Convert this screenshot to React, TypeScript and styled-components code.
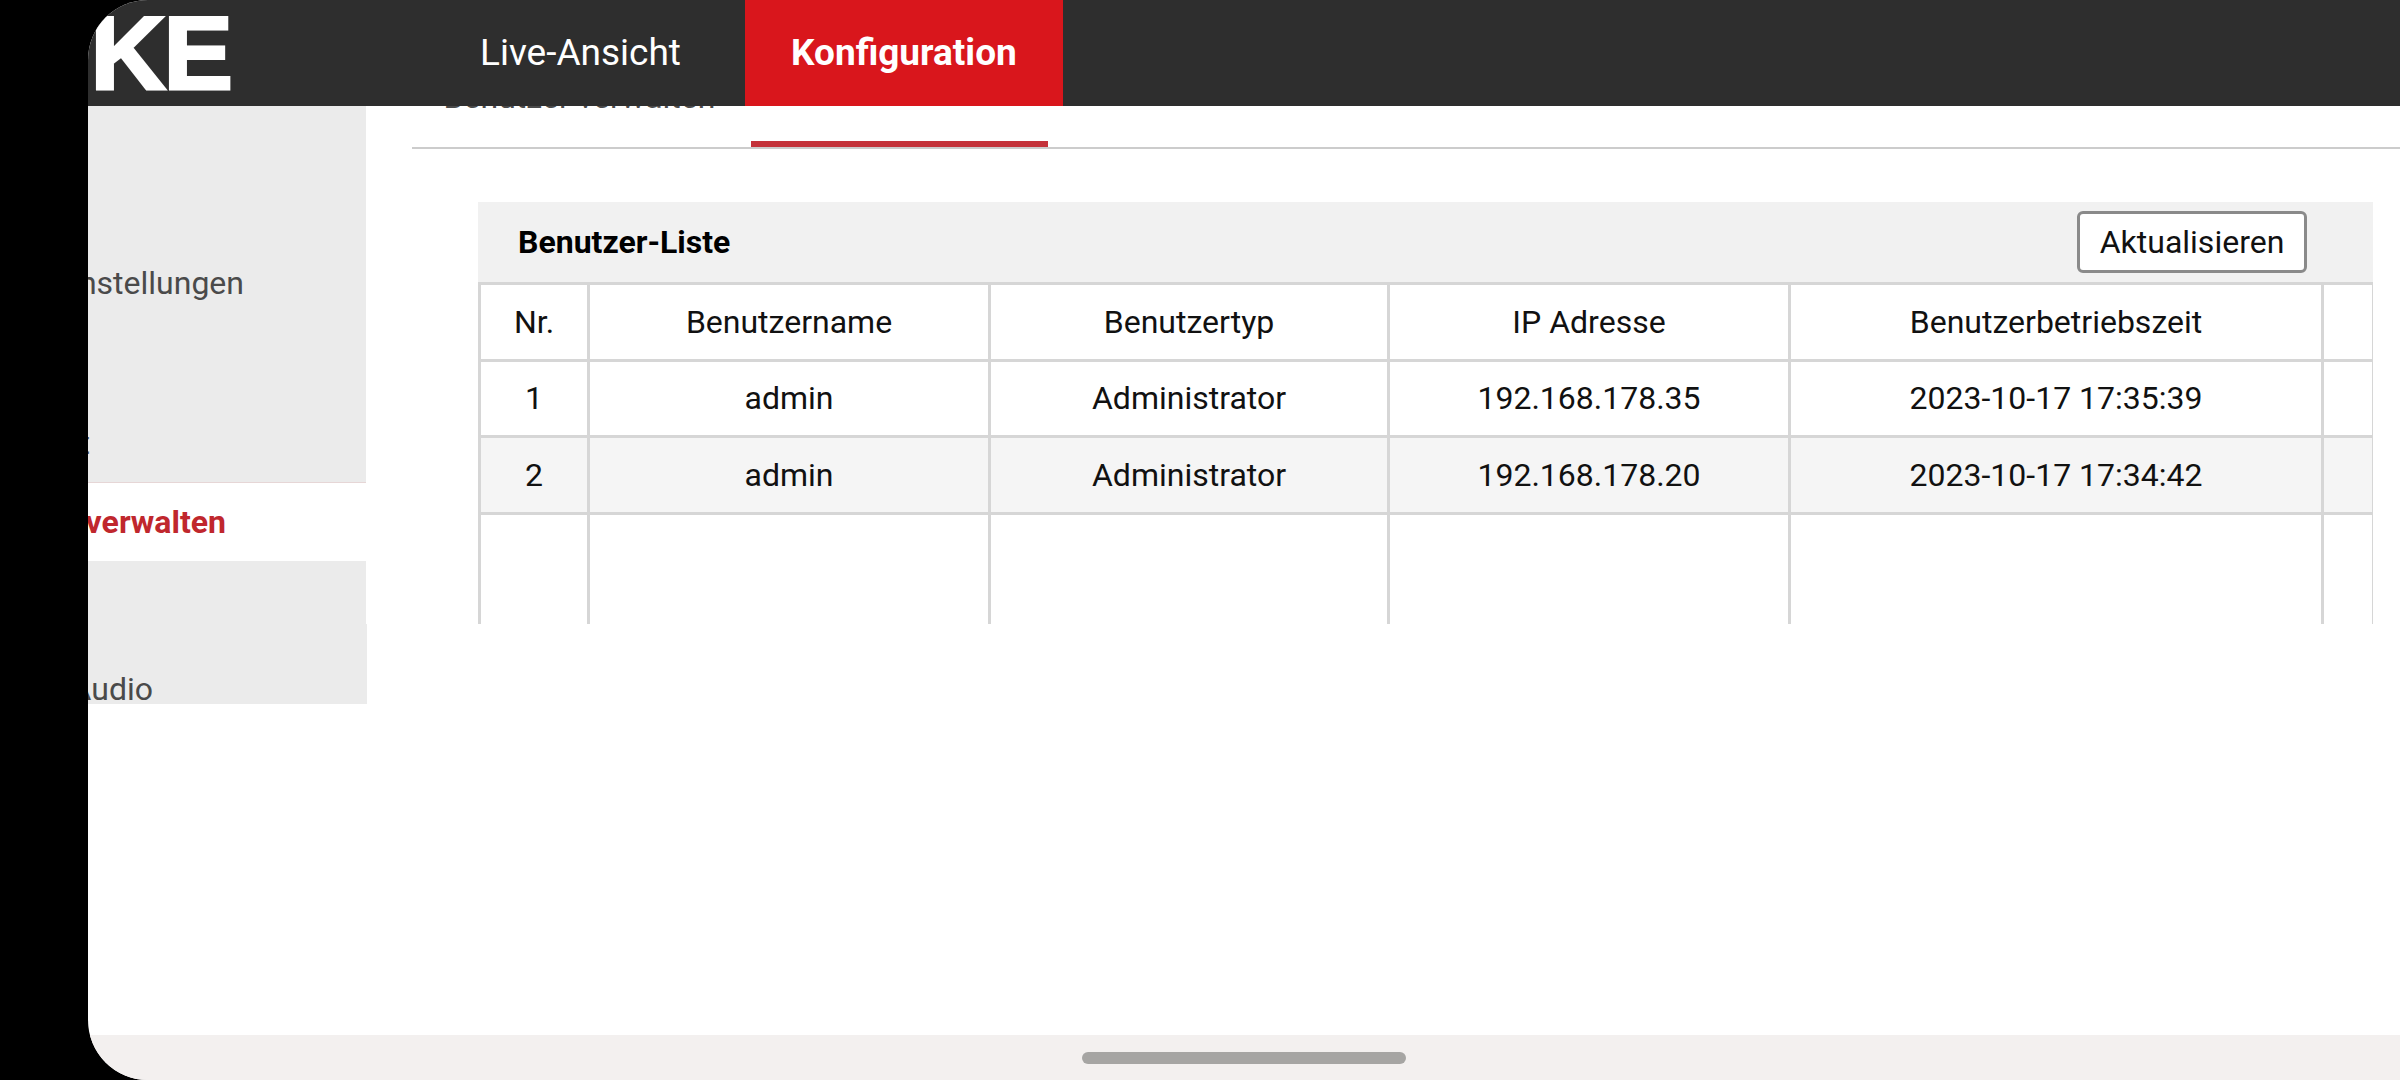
import styled, { createGlobalStyle } from "styled-components";

const GlobalStyle = createGlobalStyle`
  html, body { margin: 0; padding: 0; background: #000; }
  body { font-family: Roboto, "Liberation Sans", sans-serif; }
`;

const Page = styled.div`
  width: 2400px;
  height: 1080px;
  padding-left: 88px;
  box-sizing: border-box;
  background: #000;
  overflow: hidden;
`;

const Screen = styled.div`
  width: 2312px;
  height: 1080px;
  display: flex;
  flex-direction: column;
  background: #fff;
  overflow: hidden;
  border-radius: 60px 0 0 60px;
`;

const TopBar = styled.header`
  height: 106px;
  flex: none;
  display: flex;
  background: #2e2e2e;
`;

const Logo = styled.div`
  width: 143px;
  flex: none;
  display: flex;
  justify-content: flex-end;
  overflow: hidden;
  color: #fff;
  font: 900 104px/106px "Liberation Sans", Arial, sans-serif;
  letter-spacing: -2px;
  -webkit-text-stroke: 3px #fff;
  filter: blur(0.6px);
`;

const Nav = styled.nav`
  display: flex;
  gap: 18px;
  margin-left: 203px;
`;

const NavTab = styled.a<{ $active?: boolean }>`
  display: flex;
  align-items: center;
  padding: 0 46px 1px;
  font-size: 37px;
  font-weight: ${(p) => (p.$active ? 700 : 400)};
  color: #fff;
  background: ${(p) => (p.$active ? "#d9161c" : "transparent")};
`;

const Body = styled.div`
  flex: 1;
  display: flex;
  min-height: 0;
`;

const Sidebar = styled.aside`
  width: 278px;
  flex: none;
  display: flex;
  flex-direction: column;
`;

const SideGroup = styled.div<{ $height: number; $wide?: boolean }>`
  height: ${(p) => p.$height}px;
  width: ${(p) => (p.$wide ? "279px" : "278px")};
  flex: none;
  background: #ebebeb;
  overflow: hidden;
`;

const SideItem = styled.div<{ $height: number; $right: number; $active?: boolean }>`
  height: ${(p) => p.$height}px;
  box-sizing: border-box;
  display: flex;
  align-items: center;
  justify-content: flex-end;
  padding-right: ${(p) => p.$right}px;
  font-size: 32px;
  white-space: nowrap;
  font-weight: ${(p) => (p.$active ? 700 : 400)};
  color: ${(p) => (p.$active ? "#c0272d" : "#4a4a4a")};
  background: ${(p) => (p.$active ? "#fff" : "transparent")};
  border-top: ${(p) => (p.$active ? "1px solid #e6d6d6" : "none")};
`;

const Content = styled.main`
  flex: 1;
  min-width: 0;
  display: flex;
  flex-direction: column;
`;

const TabStrip = styled.div`
  height: 41px;
  margin-left: 46px;
  display: flex;
  border-bottom: 2px solid #cccccc;
  overflow: hidden;
`;

const Tab = styled.div<{ $active?: boolean; $width: number }>`
  width: ${(p) => p.$width}px;
  height: 41px;
  flex: none;
  box-sizing: border-box;
  padding-right: 4px;
  text-align: center;
  border-bottom: 6px solid ${(p) => (p.$active ? "#c4323a" : "transparent")};
`;

const TabLabel = styled.span`
  display: block;
  margin-top: -27px;
  font-size: 32px;
  line-height: 36px;
  white-space: nowrap;
  color: #4a4a4a;
`;

const Panel = styled.section`
  width: 1895px;
  height: 422px;
  margin: 53px 0 0 112px;
  overflow: hidden;
  box-sizing: border-box;
`;

const PanelHeader = styled.div`
  height: 80px;
  display: flex;
  align-items: center;
  justify-content: space-between;
  padding: 0 66px 0 40px;
  background: #f1f1f1;
`;

const PanelTitle = styled.h2`
  margin: 0;
  font-size: 32px;
  font-weight: 700;
  color: #000;
`;

const RefreshButton = styled.button`
  width: 230px;
  height: 62px;
  padding: 0;
  box-sizing: border-box;
  font-family: inherit;
  font-size: 32px;
  color: #111;
  background: #fff;
  border: 3px solid #8a8a8a;
  border-radius: 6px;
`;

const Table = styled.table`
  width: 1894px;
  table-layout: fixed;
  border-collapse: collapse;
  font-size: 32px;
  color: #111;
`;

const Row = styled.tr<{ $striped?: boolean; $tall?: boolean }>`
  height: ${(p) => (p.$tall ? "200px" : "76.5px")};
  background: ${(p) => (p.$striped ? "#f5f5f5" : "#fff")};
`;

const Cell = styled.td`
  padding: 0;
  text-align: center;
  border: 3px solid #d6d6d6;
`;

const HeadCell = styled(Cell).attrs({ as: "th" })`
  font-weight: 400;
`;

const HomeBar = styled.div`
  height: 45px;
  flex: none;
  display: flex;
  align-items: center;
  padding-left: 994px;
  background: #f3f0ef;
`;

const HomePill = styled.div`
  width: 324px;
  height: 12px;
  border-radius: 6px;
  background: #a6a5a3;
`;

const columns = [109, 401, 399, 401, 533, 51];

const users = [
  { id: 1, name: "admin", type: "Administrator", ip: "192.168.178.35", time: "2023-10-17 17:35:39" },
  { id: 2, name: "admin", type: "Administrator", ip: "192.168.178.20", time: "2023-10-17 17:34:42" },
];

export default function App() {
  return (
    <Page>
      <GlobalStyle />
      <Screen>
        <TopBar>
          <Logo>KE</Logo>
          <Nav>
            <NavTab>Live-Ansicht</NavTab>
            <NavTab $active>Konfiguration</NavTab>
          </Nav>
        </TopBar>
        <Body>
          <Sidebar>
            <SideGroup $height={376}>
              <SideItem $height={138} $right={0} />
              <SideItem $height={78} $right={122}>Systemeinstellungen</SideItem>
              <SideItem $height={82} $right={0} />
              <SideItem $height={78} $right={276}>Zeit</SideItem>
            </SideGroup>
            <SideItem $height={79} $right={140} $active>Benutzer verwalten</SideItem>
            <SideGroup $height={63} />
            <SideGroup $height={80} $wide>
              <SideItem $height={130} $right={214}>Audio</SideItem>
            </SideGroup>
          </Sidebar>
          <Content>
            <TabStrip>
              <Tab $width={339}>
                <TabLabel>Benutzer verwalten</TabLabel>
              </Tab>
              <Tab $width={297} $active />
            </TabStrip>
            <Panel>
              <PanelHeader>
                <PanelTitle>Benutzer-Liste</PanelTitle>
                <RefreshButton>Aktualisieren</RefreshButton>
              </PanelHeader>
              <Table>
                <colgroup>
                  {columns.map((w, i) => (
                    <col key={i} width={w} />
                  ))}
                </colgroup>
                <tbody>
                  <Row>
                    <HeadCell>Nr.</HeadCell>
                    <HeadCell>Benutzername</HeadCell>
                    <HeadCell>Benutzertyp</HeadCell>
                    <HeadCell>IP Adresse</HeadCell>
                    <HeadCell>Benutzerbetriebszeit</HeadCell>
                    <HeadCell />
                  </Row>
                  {users.map((u, i) => (
                    <Row key={u.id} $striped={i % 2 === 1}>
                      <Cell>{u.id}</Cell>
                      <Cell>{u.name}</Cell>
                      <Cell>{u.type}</Cell>
                      <Cell>{u.ip}</Cell>
                      <Cell>{u.time}</Cell>
                      <Cell />
                    </Row>
                  ))}
                  <Row $tall>
                    {columns.map((_, i) => (
                      <Cell key={i} />
                    ))}
                  </Row>
                </tbody>
              </Table>
            </Panel>
          </Content>
        </Body>
        <HomeBar>
          <HomePill />
        </HomeBar>
      </Screen>
    </Page>
  );
}
